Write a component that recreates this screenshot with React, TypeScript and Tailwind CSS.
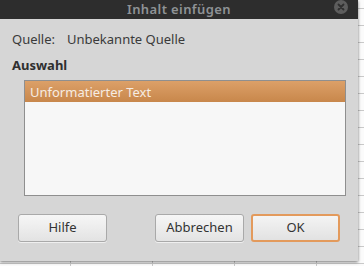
import React from "react";

const font = { fontFamily: '"Noto Sans", "Open Sans", sans-serif' };

const Button: React.FC<{ label: string; primary?: boolean }> = ({ label, primary }) => (
  <button
    className={
      primary
        ? "w-[89px] h-[28px] rounded-[3px] border-2 border-[#e39a5c] bg-gradient-to-b from-[#f4f4f4] to-[#e2e2e2] text-[13px] text-[#333]"
        : "w-[89px] h-[28px] rounded-[3px] border border-[#a9a9a9] bg-gradient-to-b from-[#f6f6f6] to-[#e3e3e3] text-[13px] text-[#333] shadow-[0_1px_0_rgba(255,255,255,0.6)]"
    }
  >
    {label}
  </button>
);

export default function App() {
  return (
    <div
      style={font}
      className="w-[364px] h-[266px] overflow-hidden bg-[#fbfbfb] bg-[linear-gradient(#c9c9c9_1px,transparent_1px),linear-gradient(90deg,#c9c9c9_1px,transparent_1px)] bg-[size:82px_17px] bg-[position:70px_8px]"
    >
      <div className="w-[358px] h-[261px] flex flex-col bg-[#d6d6d6] shadow-[0_1px_3px_rgba(0,0,0,0.55)]">
        {/* title bar */}
        <div className="relative h-[19px] bg-[#2d2d2d] flex items-center justify-center">
          <span className="text-[13px] font-semibold text-[#8f9396] tracking-[0.4px] leading-none">
            Inhalt einfügen
          </span>
          <div className="absolute left-[334px] top-[0px] w-[14px] h-[14px] rounded-full bg-[#5d5d5d] flex items-center justify-center">
            <svg width="8" height="8" viewBox="0 0 8 8">
              <path d="M1.5 1.5 L6.5 6.5 M6.5 1.5 L1.5 6.5" stroke="#2f2f2f" strokeWidth="1.8" strokeLinecap="round" />
            </svg>
          </div>
        </div>

        <div className="flex text-[13px] text-[#3a3a3a] mt-[12px] ml-[12px] leading-[17px]">
          <span className="w-[55px]">Quelle:</span>
          <span>Unbekannte Quelle</span>
        </div>

        <div className="mt-[9px] ml-[12px] text-[13px] font-bold text-[#2f2f2f] leading-[17px]">
          Auswahl
        </div>

        <div className="mt-[6px] ml-[24px] w-[322px] h-[116px] border border-[#8f8f8f] bg-[#f7f7f7]">
          <div className="h-[21px] bg-gradient-to-b from-[#dca068] to-[#c8874b] text-[13px] text-[#f6ece2] pl-[5px] leading-[22px]">
            Unformatierter Text
          </div>
        </div>

        <div className="flex mt-[18px] ml-[18px]">
          <Button label="Hilfe" />
          <div className="ml-[48px] flex gap-[7px]">
            <Button label="Abbrechen" />
            <Button label="OK" primary />
          </div>
        </div>
      </div>
    </div>
  );
}
